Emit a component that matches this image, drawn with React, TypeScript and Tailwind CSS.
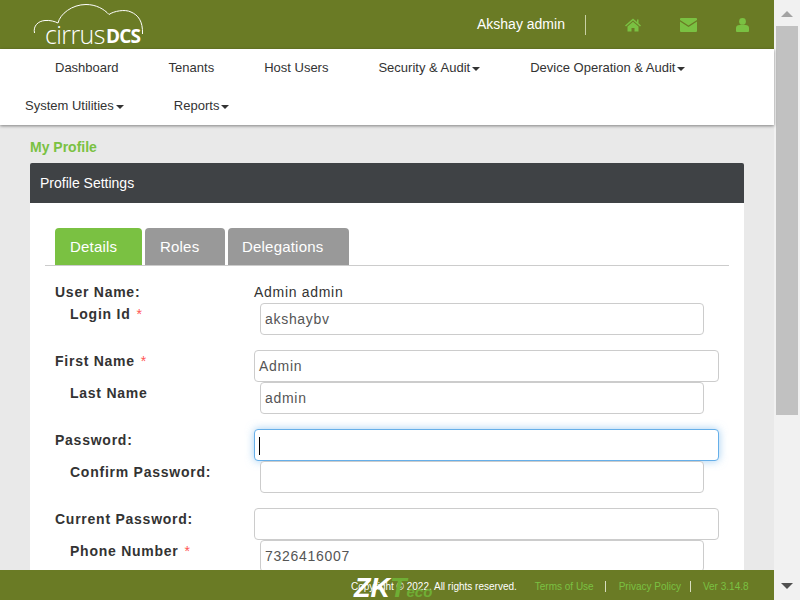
import React from "react";

const FONT = { fontFamily: '"Liberation Sans", Arial, sans-serif' };

function Logo() {
  return (
    <div className="relative w-[120px] h-[49px] ml-[33px] shrink-0">
      <svg width="120" height="49" viewBox="0 0 120 49" className="absolute left-0 top-0" fill="none" stroke="#ffffff" strokeWidth="1">
        <path d="M1.5 33 C0 26 5 21 12 20.5 C17 20 22 21.5 25 23 C27 14 39 4.5 53 4.5 C63 4.5 71 9 76 14.5 C81 11 92 9 98 12 C105 15 110 21 109.5 34" />
      </svg>
      <span className="absolute left-[12px] top-[22px] text-[25px] leading-[25px] text-white tracking-[-0.6px]" style={{ fontFamily: '"Open Sans", sans-serif', fontWeight: 300 }}>
        cirrus
      </span>
      <span className="absolute left-[73px] top-[27px] text-[19px] leading-[19px] font-bold text-white tracking-[-0.8px]" style={{ fontFamily: '"Open Sans", sans-serif' }}>
        DCS
      </span>
    </div>
  );
}

function Caret() {
  return <span className="inline-block ml-[2px] align-middle w-0 h-0 border-x-[4px] border-x-transparent border-t-[4px] border-t-[#333]" />;
}

function NavItem({ label, caret, className }: { label: string; caret?: boolean; className: string }) {
  return (
    <a className={`text-[13px] leading-[18px] text-[#333] whitespace-nowrap ${className}`}>
      {label}
      {caret && <Caret />}
    </a>
  );
}

function Row({
  label,
  star,
  indent,
  focused,
  value,
  gapTop,
}: {
  label: string;
  star?: boolean;
  indent?: boolean;
  focused?: boolean;
  value?: string;
  gapTop?: string;
}) {
  return (
    <div className={`flex h-[32px] shrink-0 ${gapTop ?? ""}`}>
      <div className={`shrink-0 font-bold text-[14px] leading-[20px] tracking-[0.75px] text-[#333] pt-[1px] ${indent ? "w-[205px] pl-[25px]" : "w-[209px] pl-[10px]"}`}>
        {label}
        {star && <span className="text-[#f55] font-normal ml-[6px]">*</span>}
      </div>
      <div
        className={`h-[32px] rounded-[4px] border bg-white px-[4px] text-[14px] leading-[30px] tracking-[0.7px] text-[#555] ${
          indent ? "w-[444px] ml-[10px]" : "w-[465px]"
        } ${focused ? "border-[#66afe9] shadow-[0_0_8px_rgba(102,175,233,0.6)]" : "border-[#ccc]"}`}
      >
        {focused ? <span className="inline-block w-px h-[18px] bg-black align-middle" /> : value}
      </div>
    </div>
  );
}

export default function App() {
  return (
    <div className="flex w-[800px] h-[600px] overflow-hidden" style={FONT}>
      <div className="w-[774px] h-full flex flex-col relative bg-[#e9e9e9]">
        <header className="h-[49px] shrink-0 bg-[#6a7b25] flex items-center">
          <Logo />
          <span className="ml-[324px] text-[14px] text-white whitespace-nowrap">Akshay admin</span>
          <span className="ml-[20px] w-px h-[20px] bg-[#c9d1a5]" />
          <svg className="ml-[39px]" width="16" height="14" viewBox="0 0 16 14" fill="#7ac142">
            <path d="M8 0.5 L12 4 V1.5 H13.5 V5.3 L16 7.5 L15 8.5 L8 2.5 L1 8.5 L0 7.5 Z M2.5 8.5 L8 3.8 L13.5 8.5 V13.5 H9.5 V10 H6.5 V13.5 H2.5 Z" />
          </svg>
          <svg className="ml-[39px]" width="17" height="14" viewBox="0 0 17 14" fill="#7ac142">
            <path d="M1 0 H16 A1 1 0 0 1 17 1 V2 L8.5 7.5 L0 2 V1 A1 1 0 0 1 1 0 Z M0 3.6 L8.5 9 L17 3.6 V13 A1 1 0 0 1 16 14 H1 A1 1 0 0 1 0 13 Z" />
          </svg>
          <svg className="ml-[39px]" width="13" height="14" viewBox="0 0 13 14" fill="#7ac142">
            <circle cx="6.5" cy="3.4" r="3.4" />
            <path d="M0 13 V10 C0 8 1.5 7 3.5 7 H9.5 C11.5 7 13 8 13 10 V13 A1 1 0 0 1 12 14 H1 A1 1 0 0 1 0 13 Z" />
          </svg>
        </header>

        <nav className="h-[76px] shrink-0 bg-white shadow-[0_1px_3px_rgba(0,0,0,0.45)] relative z-10 flex flex-col">
          <div className="flex h-[38px] items-center">
            <NavItem label="Dashboard" className="ml-[55px]" />
            <NavItem label="Tenants" className="ml-[50px]" />
            <NavItem label="Host Users" className="ml-[50px]" />
            <NavItem label="Security & Audit" caret className="ml-[50px]" />
            <NavItem label="Device Operation & Audit" caret className="ml-[50px]" />
          </div>
          <div className="flex h-[38px] items-center">
            <NavItem label="System Utilities" caret className="ml-[25px]" />
            <NavItem label="Reports" caret className="ml-[50px]" />
          </div>
        </nav>

        <main className="flex-1 min-h-0 overflow-hidden px-[30px]">
          <h1 className="mt-[13px] h-[18px] text-[14px] leading-[18px] font-bold text-[#7ac142]">My Profile</h1>
          <section className="mt-[7px]">
            <div className="h-[40px] bg-[#3f4245] rounded-t-[2px] text-[14px] leading-[40px] text-white pl-[10px]">Profile Settings</div>
            <div className="bg-white h-[400px] px-[15px] flex flex-col">
              <div className="mt-[25px] h-[38px] shrink-0 border-b border-[#ccc] flex gap-[3px] pl-[10px]">
                <div className="w-[87px] h-[37px] pl-[15px] rounded-t-[4px] bg-[#7ac142] text-white text-[15px] tracking-[0.2px] leading-[37px]">Details</div>
                <div className="w-[80px] h-[37px] pl-[15px] rounded-t-[4px] bg-[#999] text-white text-[15px] tracking-[0.2px] leading-[37px]">Roles</div>
                <div className="w-[121px] h-[37px] pl-[14px] rounded-t-[4px] bg-[#999] text-white text-[15px] tracking-[0.2px] leading-[37px]">Delegations</div>
              </div>
              <div className="flex h-[20px] mt-[16px] shrink-0 text-[14px] leading-[20px] text-[#333]">
                <div className="w-[209px] pl-[10px] font-bold tracking-[0.75px]">User Name:</div>
                <div className="tracking-[0.7px]">Admin admin</div>
              </div>
              <div className="flex flex-col mt-[1px]">
                <Row label="Login Id" star indent value="akshaybv" />
                <Row label="First Name" star value="Admin" gapTop="mt-[15px]" />
                <Row label="Last Name" indent value="admin" />
                <Row label="Password:" focused gapTop="mt-[15px]" />
                <Row label="Confirm Password:" indent />
                <Row label="Current Password:" gapTop="mt-[15px]" />
                <Row label="Phone Number" star indent value="7326416007" />
              </div>
            </div>
          </section>
        </main>

        <footer className="absolute left-0 right-0 bottom-0 h-[30px] pt-[2px] bg-[#6a7b25] flex items-center text-[10px] z-20">
          <span className="ml-[351px] text-white whitespace-nowrap">Copyright © 2022. All rights reserved.</span>
          <span className="ml-[18px] text-[#7ac142] whitespace-nowrap">Terms of Use</span>
          <span className="ml-[11px] w-px h-[11px] bg-[#d8ddc0]" />
          <span className="ml-[13px] text-[#7ac142] whitespace-nowrap">Privacy Policy</span>
          <span className="ml-[9px] w-px h-[11px] bg-[#d8ddc0]" />
          <span className="ml-[12px] text-[#7ac142] whitespace-nowrap">Ver 3.14.8</span>
          <span className="absolute left-[354px] top-[5px] text-[27px] leading-[27px] font-bold italic text-white whitespace-nowrap">
            ZK<span className="text-[#6fae35]">T</span>
            <span className="text-[#6fae35] text-[15px]">eco</span>
          </span>
        </footer>
      </div>

      <aside className="w-[26px] h-full bg-[#f1f1f1] flex flex-col items-center">
        <div className="h-[26px] pt-[2px] w-full flex items-center justify-center">
          <span className="w-0 h-0 border-x-[6px] border-x-transparent border-b-[6px] border-b-[#a3a3a3]" />
        </div>
        <div className="w-[22px] h-[389px] bg-[#c1c1c1]" />
        <div className="flex-1" />
        <div className="h-[26px] pb-[2px] w-full flex items-center justify-center">
          <span className="w-0 h-0 border-x-[6px] border-x-transparent border-t-[6px] border-t-[#505050]" />
        </div>
      </aside>
    </div>
  );
}
